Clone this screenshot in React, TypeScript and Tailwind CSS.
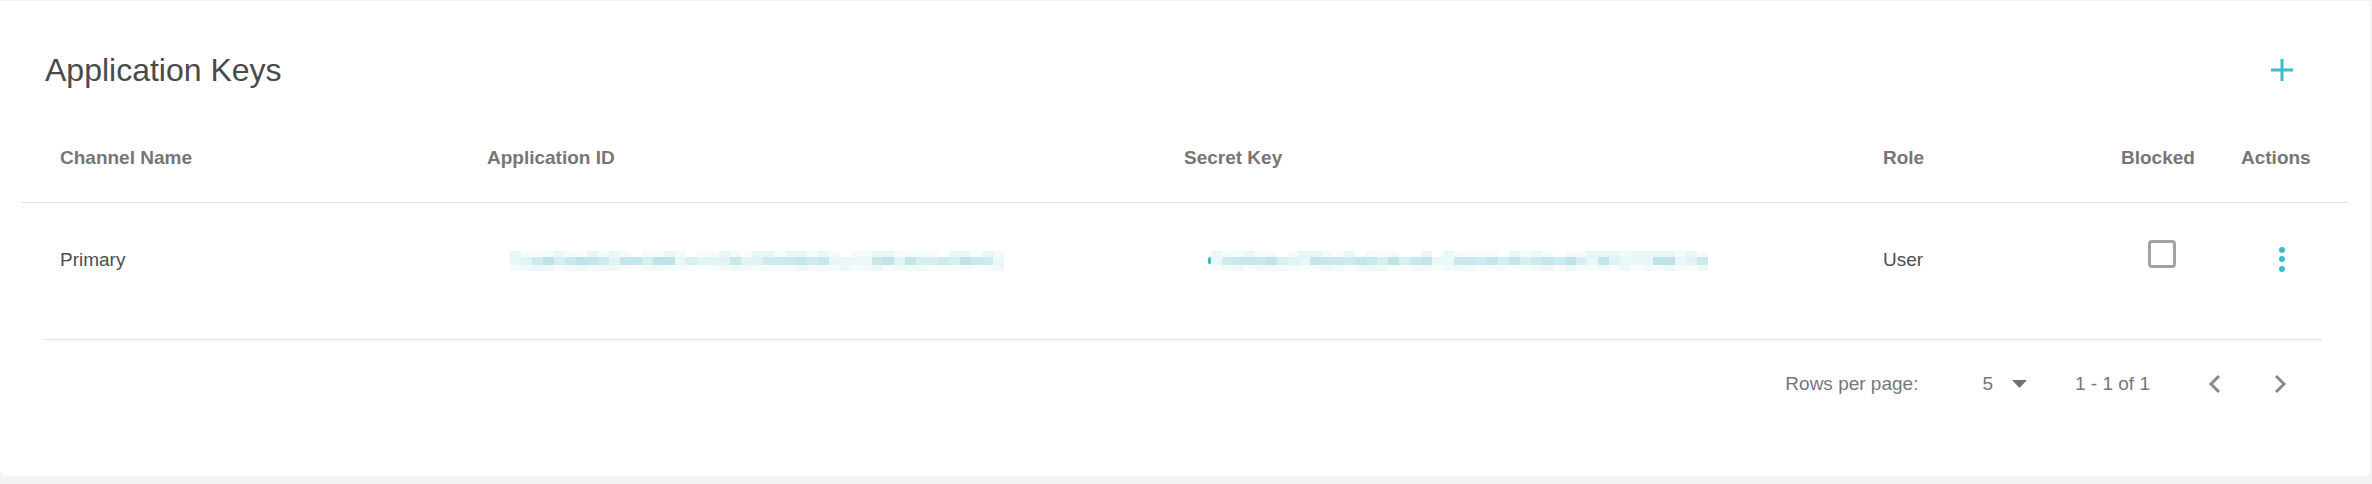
import React from 'react';

// blurred values are drawn as a mosaic of tinted blocks
type Mosaic = { rows: string[][] };

const seeded = (seed: number) => {
  let s = seed;
  return () => {
    s = (s * 9301 + 49297) % 233280;
    return s / 233280;
  };
};

const makeMosaic = (seed: number, cols: number): Mosaic => {
  const rnd = seeded(seed);
  const pick = (list: string[]) => list[Math.floor(rnd() * list.length)];
  const top = ['#f8fcfd', '#f2fafb', '#eaf6f8', '#f5fbfc', '#ffffff', '#e6f5f6'];
  const mid = ['#c2e7ea', '#cdebee', '#d6eff1', '#e0f3f5', '#bee4e8', '#c8e9ec', '#eaf7f8'];
  const bot = ['#f7fbfc', '#f2f9fa', '#eef8f9', '#fafdfd', '#f4fafb'];
  return {
    rows: [
      Array.from({ length: cols }, () => pick(top)),
      Array.from({ length: cols }, () => pick(mid)),
      Array.from({ length: cols }, () => pick(bot)),
    ],
  };
};

const appIdMosaic = makeMosaic(7, 45);
const secretMosaic = makeMosaic(31, 45);

const Blurred: React.FC<{ mosaic: Mosaic; width: number; lead?: boolean }> = ({ mosaic, width, lead }) => (
  <div className="flex items-center">
    {lead && <div className="w-[3px] h-[7px] rounded-full bg-[#3bbdc7]" />}
    <div className="flex flex-col" style={{ width }}>
      {mosaic.rows.map((row, r) => (
        <div key={r} className={`flex ${r === 1 ? 'h-[8px]' : 'h-[6px]'}`}>
          {row.map((c, i) => (
            <div key={i} className="flex-1 h-full" style={{ backgroundColor: c }} />
          ))}
        </div>
      ))}
    </div>
  </div>
);

const columns = ['Channel Name', 'Application ID', 'Secret Key', 'Role', 'Blocked', 'Actions'];

const gridCols = 'grid grid-cols-[427px_697px_699px_238px_120px_1fr] pl-[38px]';

const PlusIcon = () => (
  <svg width="24" height="24" viewBox="0 0 24 24">
    <path d="M12 1v22M1 12h22" stroke="#3bbdc7" strokeWidth="3" fill="none" />
  </svg>
);

const KebabIcon = () => (
  <div className="w-[6px] flex flex-col gap-[3.5px]">
    <div className="w-[6px] h-[6px] rounded-full bg-[#3bbdc7]" />
    <div className="w-[6px] h-[6px] rounded-full bg-[#3bbdc7]" />
    <div className="w-[6px] h-[6px] rounded-full bg-[#3bbdc7]" />
  </div>
);

const Chevron: React.FC<{ dir: 'left' | 'right' }> = ({ dir }) => (
  <svg width="14" height="20" viewBox="0 0 14 20">
    <polyline
      points={dir === 'left' ? '11,2 3,10 11,18' : '3,2 11,10 3,18'}
      stroke="#8a8a8a"
      strokeWidth="3"
      fill="none"
    />
  </svg>
);

const App: React.FC = () => {
  return (
    <div className="w-[2372px] h-[484px] bg-[#f2f3f5] pt-px pr-[2px] font-['Liberation_Sans',Arial,sans-serif]">
      <div className="bg-white h-[475px] rounded-b-[6px] pt-[33px]">
        <div className="flex items-center justify-between h-[72px] pl-[45px] pr-[76px]">
          <h1 className="text-[32px] leading-[36px] text-[#4a4a4a]">Application Keys</h1>
          <PlusIcon />
        </div>

        <div className="mx-[22px]">
          <div className={`${gridCols} pt-[41px] pb-[33px] border-b border-[#e0e0e0]`}>
            {columns.map((c) => (
              <div key={c} className="text-[19px] leading-[22px] font-bold text-[#767676]">
                {c}
              </div>
            ))}
          </div>

          <div className={`${gridCols} h-[114px] items-center text-[19px] leading-[22px] text-[#4d4d4d]`}>
            <div>Primary</div>
            <div className="pl-[23px] pt-[1px]">
              <Blurred mosaic={appIdMosaic} width={494} />
            </div>
            <div className="pl-[24px] pt-[1px]">
              <Blurred mosaic={secretMosaic} width={497} lead />
            </div>
            <div>User</div>
            <div className="pl-[27px] -mt-[12px]">
              <div className="w-[28px] h-[28px] border-[3px] border-[#a2a2a2] rounded-[4px]" />
            </div>
            <div className="pl-[38px] -mt-[2px]">
              <KebabIcon />
            </div>
          </div>
        </div>

        <div className="ml-[45px] mr-[48px] mt-[22px] border-t border-[#e0e0e0]" />

        <div className="flex items-center justify-end h-[88px] pr-[70px] text-[19px] leading-[22px] text-[#777777]">
          <span>Rows per page:</span>
          <span className="ml-[64px]">5</span>
          <svg className="ml-[19px]" width="15" height="8" viewBox="0 0 15 8">
            <polygon points="0,0 15,0 7.5,8" fill="#707070" />
          </svg>
          <span className="ml-[48px]">1 - 1 of 1</span>
          <div className="ml-[45px] w-[40px] flex justify-center">
            <Chevron dir="left" />
          </div>
          <div className="ml-[25px] w-[40px] flex justify-center">
            <Chevron dir="right" />
          </div>
        </div>
      </div>
    </div>
  );
};

export default App;
